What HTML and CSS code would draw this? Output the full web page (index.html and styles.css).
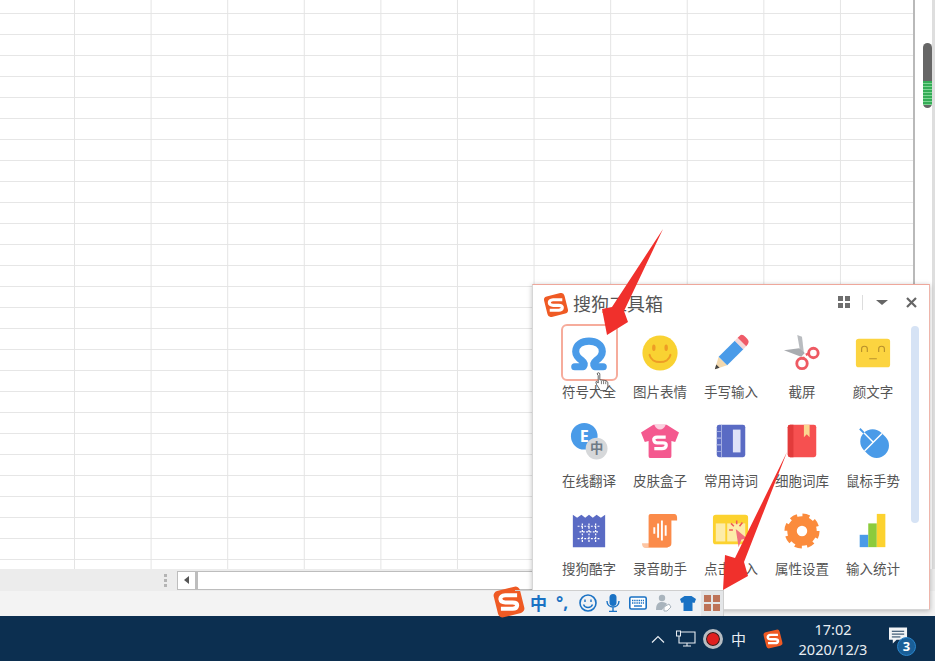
FILE: index.html
```html
<!DOCTYPE html>
<html lang="zh-CN">
<head>
    <meta charset="UTF-8">
    <title>搜狗工具箱</title>
    <link rel="stylesheet" href="styles.css">
</head>
<body>
    <svg class="defs" width="0" height="0">
        <symbol id="sogou" viewBox="0 0 40 40">
            <rect x="5" y="5" width="30" height="30" rx="5" fill="#ef5a24" transform="rotate(-14 20 20)"/>
            <path d="M29 12.5H16Q10 13 10.5 17Q11 20.5 16 20.5H24Q29.5 20.5 29 24Q28.5 27.5 24 27.5H11" fill="none" stroke="#fff" stroke-width="4.5"/>
        </symbol>
    </svg>

    <div class="app">
        <div class="sheet-row">
            <div class="grid"></div>
            <div class="vscroll">
                <div class="vthumb"><div class="vthumb-green"></div></div>
            </div>
        </div>
        <div class="hbar">
            <span class="grip"></span>
            <span class="harrow"><span class="harrow-tri"></span></span>
            <span class="htrack"></span>
        </div>
        <div class="statusbar"></div>
        <div class="taskbar">
            <svg class="tray-chevron" viewBox="0 0 14 8"><path d="M1 7.5L7 1.5L13 7.5" fill="none" stroke="#e8edf2" stroke-width="1.2"/></svg>
            <svg class="tray-monitor" viewBox="0 0 20 18"><path d="M3 2H19V13H3ZM7 16H15M11 13V16" fill="none" stroke="#e8edf2" stroke-width="1.1"/><rect x="0.5" y="1" width="4" height="5" fill="#0c2f50" stroke="#e8edf2"/></svg>
            <span class="tray-record"></span>
            <span class="tray-lang">中</span>
            <svg class="tray-logo"><use href="#sogou"/></svg>
            <div class="clock">
                <span>17:02</span>
                <span>2020/12/3</span>
            </div>
            <div class="notify">
                <svg class="notify-icon" viewBox="0 0 20 18"><path d="M0 0H19V13H8L4 17V13H0Z" fill="#f2f4f6"/><path d="M3 4H16M3 7H16M3 10H12" stroke="#0c2f50" stroke-width="1"/></svg>
                <span class="badge">3</span>
            </div>
        </div>
    </div>

    <div class="panel">
        <div class="panel-head">
            <svg class="panel-logo"><use href="#sogou"/></svg>
            <h1 class="panel-title">搜狗工具箱</h1>
            <svg class="head-grid" viewBox="0 0 12 12"><path d="M0 0H5V5H0ZM7 0H12V5H7ZM0 7H5V12H0ZM7 7H12V12H7Z" fill="#6e6e6e"/></svg>
            <span class="head-divider"></span>
            <span class="head-caret"></span>
            <svg class="head-close" viewBox="0 0 11 11"><path d="M1 1L10 10M10 1L1 10" stroke="#666" stroke-width="2.2"/></svg>
        </div>
        <div class="panel-body">
            <div class="tools">
                <div class="tool">
                    <div class="tool-icon selected">
                        <svg class="ico" viewBox="0 0 40 40"><path d="M5 34.5H14C15.5 32 15 30 13 28.5C8.5 25.5 6 22.500 6 18.500C6 11 13 7.500 20 7.500C27 7.500 34 11 34 18.500C34 22.500 31.500 25.500 27 28.500C25 30 24.500 32 26 34.500H35" fill="none" stroke="#4a9be8" stroke-width="7.5" stroke-linecap="round" stroke-linejoin="round"/></svg>
                    </div>
                    <span class="tool-name">符号大全</span>
                </div>
                <div class="tool">
                    <div class="tool-icon">
                        <svg class="ico" viewBox="0 0 40 40"><circle cx="20" cy="20" r="18.5" fill="#f9d232"/><ellipse cx="13.5" cy="14.5" rx="1.8" ry="3.5" fill="#ee9c25"/><ellipse cx="26.5" cy="14.5" rx="1.8" ry="3.5" fill="#ee9c25"/><path d="M9 22C11 32 29 32 31 22" fill="none" stroke="#ee9c25" stroke-width="2.2" stroke-linecap="round"/></svg>
                    </div>
                    <span class="tool-name">图片表情</span>
                </div>
                <div class="tool">
                    <div class="tool-icon">
                        <svg class="ico" viewBox="0 0 40 40">
                            <path d="M3 37L7 24L16 33Z" fill="#f3d9ae"/>
                            <path d="M3 37L4.5 32L8 35.5Z" fill="#444"/>
                            <path d="M7 24L24 7L33 16L16 33Z" fill="#4a9be8"/>
                            <path d="M24 7L27 4L36 13L33 16Z" fill="#f5d6d6"/>
                            <path d="M27 4L29 2C31 0 33 1 35 3L37 5C39 7 39 9 37.5 11L36 13Z" fill="#ef5b68"/>
                        </svg>
                    </div>
                    <span class="tool-name">手写输入</span>
                </div>
                <div class="tool">
                    <div class="tool-icon">
                        <svg class="ico" viewBox="0 0 40 40">
                            <path d="M15 1L20 3L22 20L19 24Z" fill="#b9bcc0"/>
                            <path d="M1 17L17 15L23 20L19 24Z" fill="#a9acb0"/>
                            <circle cx="20" cy="31" r="5.5" fill="#fff" stroke="#ee5a63" stroke-width="3"/>
                            <circle cx="32" cy="20" r="5" fill="#fff" stroke="#ee5a63" stroke-width="3"/>
                            <path d="M21 24L22 27M24 22L28 20" stroke="#ee5a63" stroke-width="2.5"/>
                        </svg>
                    </div>
                    <span class="tool-name">截屏</span>
                </div>
                <div class="tool">
                    <div class="tool-icon">
                        <svg class="ico" viewBox="0 0 40 40"><rect x="2" y="5" width="36" height="30" rx="3" fill="#fcd440"/><path d="M8 19V15.5C8 12 14 12 14 15.5V19M26 19V15.5C26 12 32 12 32 15.5V19M16 26H24" fill="none" stroke="#b9912c" stroke-width="1.2"/></svg>
                    </div>
                    <span class="tool-name">颜文字</span>
                </div>

                <div class="tool">
                    <div class="tool-icon">
                        <svg class="ico" viewBox="0 0 40 40">
                            <circle cx="15" cy="15" r="14" fill="#4a9be8"/>
                            <text class="ico-text ico-e" x="15" y="21">E</text>
                            <circle cx="28" cy="28" r="11.5" fill="#d6d8da"/>
                            <text class="ico-text ico-zh" x="28" y="33">中</text>
                        </svg>
                    </div>
                    <span class="tool-name">在线翻译</span>
                </div>
                <div class="tool">
                    <div class="tool-icon">
                        <svg class="ico" viewBox="0 0 40 40">
                            <path d="M13 3H27L40 11L36 21L32 20V36Q32 38 30 38H10Q8 38 8 36V20L4 21L0 11Z" fill="#f4598f"/>
                            <path d="M14 3H26Q24 8 20 8Q16 8 14 3Z" fill="#fbd0df"/>
                            <path d="M26 16H17Q13 16 13.5 19Q14 22 17 22H23Q27 22 26.5 25Q26 28 22 28H14" fill="none" stroke="#fff" stroke-width="3.5"/>
                        </svg>
                    </div>
                    <span class="tool-name">皮肤盒子</span>
                </div>
                <div class="tool">
                    <div class="tool-icon">
                        <svg class="ico" viewBox="0 0 40 40">
                            <rect x="5" y="3" width="30" height="34" rx="2.5" fill="#5a6bc4"/>
                            <rect x="22" y="8" width="8" height="24" fill="#dfe3f8"/>
                            <path d="M5 10H10V17H5M5 17H10V24H5M5 24H10V31H5M10 3V37" fill="none" stroke="#a4aee0" stroke-width="1"/>
                        </svg>
                    </div>
                    <span class="tool-name">常用诗词</span>
                </div>
                <div class="tool">
                    <div class="tool-icon">
                        <svg class="ico" viewBox="0 0 40 40">
                            <rect x="5" y="3" width="30" height="34" rx="2.5" fill="#f65050"/>
                            <path d="M7.5 3H11V37H7.5Q5 37 5 34.5V5.5Q5 3 7.5 3Z" fill="#e23b3b"/>
                            <path d="M22 3H28V16L25 13L22 16Z" fill="#fbd690"/>
                        </svg>
                    </div>
                    <span class="tool-name">细胞词库</span>
                </div>
                <div class="tool">
                    <div class="tool-icon">
                        <svg class="ico" viewBox="0 0 40 40">
                            <g transform="rotate(-45 21 22)">
                                <rect x="8" y="7" width="26" height="32" rx="13" fill="#4a9be8"/>
                                <path d="M8 21H34M21 7V21" stroke="#fff" stroke-width="1.5"/>
                                <path d="M21 7V1" stroke="#4a9be8" stroke-width="2"/>
                            </g>
                        </svg>
                    </div>
                    <span class="tool-name">鼠标手势</span>
                </div>

                <div class="tool">
                    <div class="tool-icon">
                        <svg class="ico" viewBox="0 0 40 40">
                            <path d="M3 3L7.5 6L12 3L16 6L20 3L24 6L28 3L32.5 6L37 3V37H3Z" fill="#5a6bc4"/>
                            <path d="M8 15H32M10 21H30M8 28H32M13 12V32M20 12V32M27 12V32" fill="none" stroke="#fff" stroke-width="1.3" stroke-dasharray="2 1.5"/>
                        </svg>
                    </div>
                    <span class="tool-name">搜狗酷字</span>
                </div>
                <div class="tool">
                    <div class="tool-icon">
                        <svg class="ico" viewBox="0 0 40 40">
                            <path d="M1 33H28V38H5Q1 38 1 33Z" fill="#fdc6a4"/>
                            <path d="M8 4Q8 2 10 2H35Q38 2 38 6V9H32V33Q32 37 28 37H8Z" fill="#fb8b4a"/>
                            <path d="M14 16V23M18 12V27M22 9V30M26 14V25" stroke="#fff" stroke-width="2"/>
                        </svg>
                    </div>
                    <span class="tool-name">录音助手</span>
                </div>
                <div class="tool">
                    <div class="tool-icon">
                        <svg class="ico" viewBox="0 0 40 40">
                            <rect x="1" y="3" width="37" height="31" rx="3" fill="#fcd22f"/>
                            <rect x="4" y="12" width="10" height="19" fill="#fdeca8"/>
                            <rect x="16" y="12" width="19" height="19" fill="#fdeca8"/>
                            <path d="M26 9V13M20 12L23 15M32 11L29 15M18 19H22" stroke="#ef5b58" stroke-width="1.6"/>
                            <path d="M25 18L37 28L31 29L28 37Z" fill="#f0707c"/>
                        </svg>
                    </div>
                    <span class="tool-name">点击输入</span>
                </div>
                <div class="tool">
                    <div class="tool-icon">
                        <svg class="ico" viewBox="0 0 40 40">
                            <circle cx="20" cy="20" r="10.5" fill="none" stroke="#fb8b3c" stroke-width="10"/>
                            <circle cx="20" cy="20" r="15.5" fill="none" stroke="#fb8b3c" stroke-width="6" stroke-dasharray="7 5.17"/>
                        </svg>
                    </div>
                    <span class="tool-name">属性设置</span>
                </div>
                <div class="tool">
                    <div class="tool-icon">
                        <svg class="ico" viewBox="0 0 40 40">
                            <rect x="6" y="24" width="9" height="13" fill="#4a9be8"/>
                            <rect x="15" y="12" width="9" height="25" fill="#8ccb3c"/>
                            <rect x="24" y="2" width="9" height="35" fill="#fcd22f"/>
                        </svg>
                    </div>
                    <span class="tool-name">输入统计</span>
                </div>
            </div>
            <div class="panel-scroll"></div>
        </div>
    </div>

    <div class="imebar">
        <svg class="ime-logo"><use href="#sogou"/></svg>
        <span class="ime-lang">中</span>
        <span class="ime-punct">°,</span>
        <svg class="ime-ico" viewBox="0 0 18 18"><circle cx="9" cy="9" r="8" fill="none" stroke="#1a72c4" stroke-width="1.6"/><path d="M6 5.5V8M12 5.5V8" stroke="#1a72c4" stroke-width="1.4"/><path d="M4.5 10.5C6 14.5 12 14.5 13.5 10.5" fill="none" stroke="#1a72c4" stroke-width="1.4"/></svg>
        <svg class="ime-ico" viewBox="0 0 18 18"><rect x="5.5" y="0" width="7" height="12" rx="3.5" fill="#1a72c4"/><path d="M3 7C3 15 15 15 15 7M9 13V17M5 17.5H13" fill="none" stroke="#1a72c4" stroke-width="1.4"/></svg>
        <svg class="ime-ico" viewBox="0 0 18 18"><rect x="0.8" y="3" width="16.4" height="12" rx="1.5" fill="#fff" stroke="#1a72c4" stroke-width="1.6"/><path d="M3 6.5H15M3 9H15" stroke="#1a72c4" stroke-width="1.4" stroke-dasharray="1.4 .8"/><path d="M5 12H13" stroke="#1a72c4" stroke-width="1.4"/></svg>
        <svg class="ime-ico" viewBox="0 0 18 18"><circle cx="8" cy="4" r="3.2" fill="#a9b4bd"/><path d="M2 16C2 9 5 8 8 8C11 8 12 9 13 10L8 16Z" fill="#a9b4bd"/><path d="M10 13L15 10L17 13L13 17H10Z" fill="#fff" stroke="#a9b4bd"/></svg>
        <svg class="ime-ico" viewBox="0 0 18 18"><path d="M5.5 2H12.5L17 5L15.5 9L13.5 8.5V17H4.5V8.5L2.5 9L1 5Z" fill="#1a72c4"/></svg>
        <span class="ime-box">
            <svg class="ime-grid" viewBox="0 0 16 16"><path d="M0 0H7V7H0ZM9 0H16V7H9ZM0 9H7V16H0ZM9 9H16V16H9Z" fill="#bd7358"/></svg>
        </span>
    </div>

    <svg class="cursor" viewBox="0 0 14 18"><path d="M2 1.5C2 0 4.5 0 4.5 1.5V7L9 7.5C11 8 12 8.5 12 10V13L10.5 17H5L1.5 11.5L.8 9C1 8 2 8.5 3 10V3Z" fill="#fff" stroke="#333" stroke-width=".7"/><path d="M6 8V11M8 8V11M10 8.5V11" stroke="#333" stroke-width=".6"/></svg>

    <svg class="arrows" viewBox="0 0 935 661">
        <path d="M663 229L624 311L628 322L607 335L602 309L612 307Z" fill="#f0302c"/>
        <path d="M787 452L744 562L748 576L723 590L725 555L735 558Z" fill="#f0302c"/>
    </svg>
</body>
</html>
```

FILE: styles.css
```css
* {
    box-sizing: border-box;
}
body {
    margin: 0;
    width: 935px;
    height: 661px;
    overflow: hidden;
    position: relative;
    background-color: #fff;
    font-family: "Noto Sans CJK SC", "Noto Sans", sans-serif;
    color: #555;
}
.defs {
    position: absolute;
}
.app {
    display: flex;
    flex-direction: column;
    height: 661px;
}

/* spreadsheet */
.sheet-row {
    display: flex;
    height: 569px;
}
.grid {
    flex: 1;
    border-right: 2px solid #b9b9b9;
    background-color: #fff;
    background-image:
        linear-gradient(to left, #e4e4e4 1px, transparent 1px),
        linear-gradient(to top, #e6e6e6 1px, transparent 1px);
    background-size: 76.6px 21px;
    background-position: -1.6px -7px;
}
.vscroll {
    width: 20px;
    padding: 43px 3px 0 8px;
    background-color: #fff;
    border-right: 3px solid #dedede;
}
.vthumb {
    width: 9px;
    height: 65px;
    padding-top: 38px;
    border-radius: 5px;
    background-color: #666;
}
.vthumb-green {
    height: 24px;
    background-image: repeating-linear-gradient(#35ad57 0, #35ad57 2px, #7ed593 2px, #7ed593 3px);
}
.hbar {
    display: flex;
    align-items: center;
    height: 22px;
    padding-left: 164px;
    background-color: #ececec;
}
.grip {
    width: 3px;
    height: 13px;
    margin-right: 10px;
    border-left: 3px dotted #b4b4b4;
}
.harrow {
    display: flex;
    align-items: center;
    justify-content: center;
    width: 19px;
    height: 19px;
    background-color: #fff;
    border: 1px solid #bdbdbd;
}
.harrow-tri {
    border-style: solid;
    border-width: 4.5px 5px 4.5px 0;
    border-color: transparent #555 transparent transparent;
}
.htrack {
    flex: 1;
    height: 19px;
    margin-right: 20px;
    background-color: #fff;
    border: 1px solid #bdbdbd;
    border-left-width: 2px;
}
.statusbar {
    height: 25px;
    background-color: #f3f3f3;
}

/* windows taskbar */
.taskbar {
    display: flex;
    align-items: center;
    height: 45px;
    padding-left: 651px;
    background-color: #0c2f50;
    color: #e8edf2;
}
.tray-chevron {
    width: 14px;
    height: 8px;
}
.tray-monitor {
    width: 20px;
    height: 18px;
    margin-left: 11px;
}
.tray-record {
    width: 20px;
    height: 20px;
    margin-left: 7px;
    border-radius: 50%;
    background-color: #e01f1f;
    border: 3px solid #b6bcc2;
    box-shadow: inset 0 0 0 1px #222;
}
.tray-lang {
    width: 16px;
    margin-left: 8px;
    font-size: 15px;
    line-height: 20px;
}
.tray-logo {
    width: 22px;
    height: 22px;
    margin-left: 15px;
}
.clock {
    display: flex;
    flex-direction: column;
    align-items: center;
    width: 90px;
    margin-left: 4px;
    font-family: "Noto Sans", sans-serif;
    font-size: 14.5px;
    line-height: 20px;
}
.notify {
    position: relative;
    width: 30px;
    height: 30px;
    margin-left: 10px;
    padding: 3px 0 0 1px;
}
.notify-icon {
    display: block;
    width: 19px;
    height: 18px;
}
.badge {
    position: absolute;
    left: 9px;
    top: 13px;
    width: 19px;
    height: 19px;
    border-radius: 50%;
    background-color: #1a5f98;
    border: 1px solid #2a86cc;
    color: #fff;
    font-family: "Noto Sans", sans-serif;
    font-size: 13px;
    font-weight: bold;
    line-height: 17px;
    text-align: center;
}

/* tool box panel */
.panel {
    position: absolute;
    left: 532px;
    top: 284px;
    width: 398px;
    height: 326px;
    background-color: #fff;
    border: 1px solid #d6d6d6;
    border-top-color: #eea79b;
    border-right-color: #eeb5ab;
    box-shadow: 0 1px 5px rgba(0, 0, 0, 0.25);
}
.panel-head {
    display: flex;
    align-items: center;
    height: 39px;
    padding: 0 0 4px 9px;
}
.panel-logo {
    width: 28px;
    height: 28px;
    margin-top: 4px;
}
.panel-title {
    width: 265px;
    margin: 0 0 0 3px;
    font-size: 18px;
    font-weight: normal;
    line-height: 24px;
    color: #555;
}
.head-grid {
    width: 12px;
    height: 12px;
    margin-top: -2px;
}
.head-divider {
    width: 1px;
    height: 15px;
    margin-left: 12px;
    background-color: #ddd;
}
.head-caret {
    margin-left: 13px;
    border-style: solid;
    border-width: 5px 6px 0 6px;
    border-color: #666 transparent transparent transparent;
}
.head-close {
    width: 11px;
    height: 11px;
    margin-left: 18px;
}
.panel-body {
    display: flex;
}
.tools {
    display: grid;
    grid-template-columns: repeat(5, 71px);
    grid-auto-rows: 88.5px;
    width: 355px;
    margin-left: 20.5px;
}
.tool {
    display: flex;
    flex-direction: column;
    align-items: center;
}
.tool:nth-child(n+11) .ico {
    margin-top: 3px;
}
.tool-icon {
    display: flex;
    align-items: center;
    justify-content: center;
    width: 57px;
    height: 57px;
    border: 2px solid transparent;
    border-radius: 6px;
}
.tool-icon.selected {
    border-color: #f6ac9c;
}
.ico {
    width: 38px;
    height: 38px;
}
.ico-text {
    fill: #fff;
    text-anchor: middle;
    font-family: "Noto Sans", sans-serif;
    font-weight: bold;
}
.ico-e {
    font-size: 17px;
}
.ico-zh {
    fill: #6e7b86;
    font-family: "Noto Sans CJK SC", sans-serif;
    font-size: 14px;
}
.tool-name {
    margin-top: 1px;
    font-size: 13.5px;
    line-height: 18px;
    white-space: nowrap;
}
.panel-scroll {
    width: 8px;
    height: 197px;
    margin: 2px 0 0 2.5px;
    border-radius: 4px;
    background-color: #d6e3f5;
}

/* ime status bar */
.imebar {
    position: absolute;
    left: 493px;
    top: 590px;
    width: 231px;
    height: 26px;
    display: flex;
    align-items: center;
    background-image: linear-gradient(to right, transparent 22px, #f0f2f5 22px);
}
.imebar::before {
    content: "";
    position: absolute;
    left: 22px;
    right: 0;
    top: 0;
    height: 1px;
    background-color: #cfcfcf;
}
.ime-logo {
    width: 36px;
    height: 36px;
    margin: -3px 0 0 -2px;
}
.ime-lang {
    width: 18px;
    margin-left: 3px;
    font-size: 17px;
    font-weight: bold;
    line-height: 24px;
    color: #1a72c4;
}
.ime-punct {
    width: 16px;
    margin-left: 8px;
    font-family: "Noto Sans", sans-serif;
    font-size: 17px;
    font-weight: bold;
    line-height: 20px;
    color: #1a72c4;
}
.ime-ico {
    width: 18px;
    height: 18px;
    margin-left: 7px;
}
.ime-box {
    display: flex;
    align-items: center;
    justify-content: center;
    width: 23px;
    height: 25px;
    margin-left: 4px;
    background-color: #e4e6e8;
    border-right: 1px solid #cfcfcf;
}
.ime-grid {
    width: 16px;
    height: 16px;
}

/* things lying over the picture */
.cursor {
    position: absolute;
    left: 595px;
    top: 372px;
    width: 15px;
    height: 20px;
}
.arrows {
    position: absolute;
    left: 0;
    top: 0;
    width: 935px;
    height: 661px;
    pointer-events: none;
}
```
